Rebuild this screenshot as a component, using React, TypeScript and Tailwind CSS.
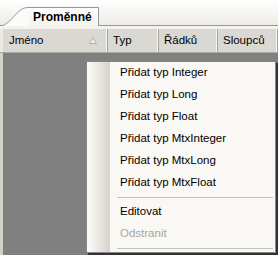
import React from "react";

const ITEMS = [
  "Přidat typ Integer",
  "Přidat typ Long",
  "Přidat typ Float",
  "Přidat typ MtxInteger",
  "Přidat typ MtxLong",
  "Přidat typ MtxFloat",
];

const COLUMNS = [
  { label: "Jméno", width: "w-[104px]", sort: true },
  { label: "Typ", width: "w-[51px]" },
  { label: "Řádků", width: "w-[59px]" },
  { label: "Sloupců", width: "w-[60px]" },
];

function MenuItem({ label, disabled }: { label: string; disabled?: boolean }) {
  return (
    <div className="h-[22px] flex items-center">
      <div className="w-[23px] self-stretch bg-gradient-to-r from-[#fdfdfb] to-[#d6d3ca]" />
      <span className={`pl-[10px] ${disabled ? "text-[#a8a79f]" : "text-black"}`}>{label}</span>
    </div>
  );
}

function Separator() {
  return (
    <div className="h-[7px] flex items-center">
      <div className="w-[23px] self-stretch bg-gradient-to-r from-[#fdfdfb] to-[#d6d3ca]" />
      <div className="ml-[7px] mr-[2px] flex-1 h-px bg-[#c5c2b8]" />
    </div>
  );
}

export default function App() {
  return (
    <div
      className="w-[278px] h-[255px] flex flex-col overflow-hidden bg-[#808080] text-[11.5px]"
      style={{ fontFamily: '"Liberation Sans", Arial, sans-serif' }}
    >
      {/* Tab strip */}
      <div className="h-[26px] flex items-end bg-gradient-to-b from-[#ffffff] to-[#ecebe5]">
        <div className="w-[3px] h-px bg-[#919b9c]" />
        <svg width="26" height="19" viewBox="0 0 26 19" className="block">
          <path d="M0 19 C8 15 14 4 20 1.5 Q22 0.5 26 0.5 L26 19 Z" fill="#fbfbf9" />
          <path d="M0 18.5 C8 15 14 4 20 1.5 Q22 0.5 26 0.5" fill="none" stroke="#919b9c" strokeWidth="1" />
        </svg>
        <div className="w-[70px] h-[19px] border-t border-r border-[#919b9c] bg-gradient-to-b from-[#fdfdfd] to-[#f4f3ee] flex items-center pl-[4px] font-bold text-[12px] text-black">
          Proměnné
        </div>
        <div className="flex-1 h-px bg-[#919b9c]" />
      </div>
      <div className="h-[3px] bg-[#f3f2ec]" />

      {/* Column header */}
      <div className="h-[24px] flex bg-[#d9d8d3] border-b border-[#a9a8a2]">
        <div className="w-[3px] bg-[#ebe9e2]" />
        {COLUMNS.map((c) => (
          <div
            key={c.label}
            className={`${c.width} flex items-center justify-between pl-[6px] pr-[9px] border-r border-[#f6f6f4] shadow-[1px_0_0_#a4a39d] text-black`}
          >
            <span>{c.label}</span>
            {c.sort && (
              <svg width="8" height="7" viewBox="0 0 8 7">
                <path d="M4 0.5 L7.5 6.5 L0.5 6.5 Z" fill="#eeeeea" stroke="#b4b3ad" strokeWidth="1" />
              </svg>
            )}
          </div>
        ))}
        <div className="flex-1" />
      </div>

      {/* Body with context menu */}
      <div className="flex-1 flex relative">
        <div className="w-[3px] bg-[#d4d0c8]" />
        <div className="flex-1 bg-[#808080]" />

        <div className="absolute left-[86px] top-[8px] w-[190px] border border-[#868686] bg-[#f9f8f4] shadow-[2px_2px_1px_rgba(0,0,0,0.6)]">
          {ITEMS.map((label) => (
            <MenuItem key={label} label={label} />
          ))}
          <Separator />
          <MenuItem label="Editovat" />
          <MenuItem label="Odstranit" disabled />
          <Separator />
        </div>
      </div>
    </div>
  );
}
